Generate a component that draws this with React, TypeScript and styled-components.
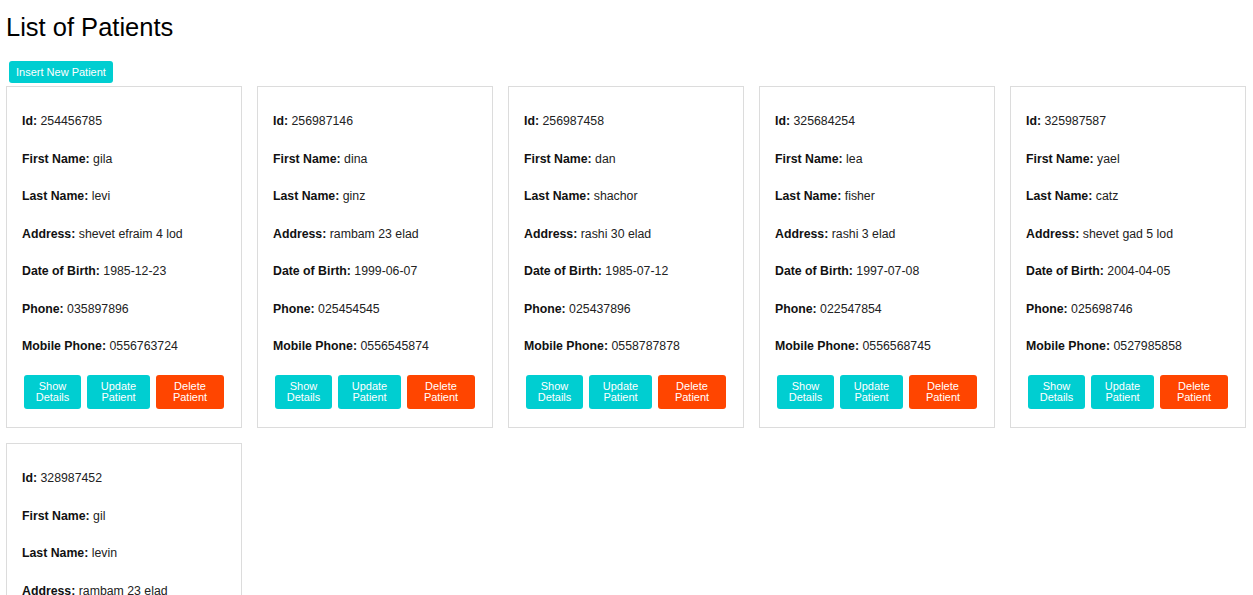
import React from "react";
import styled, { createGlobalStyle } from "styled-components";

const GlobalStyle = createGlobalStyle`
  html, body { margin: 0; padding: 0; background: #fff; }
  body { font-family: "Liberation Sans", Arial, sans-serif; color: #000; }
`;

const Page = styled.div`
  padding: 0 6px;
`;

const Title = styled.h1`
  margin: 12px 0 0 0;
  font-size: 25.5px;
  line-height: 30px;
  font-weight: normal;
  color: #000;
`;

const InsertButton = styled.button`
  margin: 19px 0 3px 3px;
  height: 22px;
  padding: 0 7px;
  font-family: inherit;
  font-size: 11px;
  color: #fff;
  background: #00ced1;
  border: none;
  border-radius: 3px;
  cursor: pointer;
`;

const Grid = styled.div`
  display: flex;
  flex-wrap: wrap;
  gap: 15px;
`;

const Card = styled.div`
  box-sizing: border-box;
  width: 236px;
  border: 1px solid #dcdcdc;
  padding: 26px 15px 18px 15px;
  display: flex;
  flex-direction: column;
`;

const Field = styled.p`
  margin: 0 0 21.5px 0;
  font-size: 12.3px;
  line-height: 16px;
  color: #222;
  white-space: nowrap;
`;

const Label = styled.span`
  font-weight: bold;
  color: #111;
`;

const Actions = styled.div`
  display: flex;
  gap: 6px;
  margin: -0.5px 0 0 2px;
`;

const ActionButton = styled.button<{ $w: number; $danger?: boolean }>`
  box-sizing: border-box;
  width: ${(p) => p.$w}px;
  height: 34px;
  padding: 0;
  font-family: inherit;
  font-size: 11px;
  line-height: 11.5px;
  color: #fff;
  background: ${(p) => (p.$danger ? "#ff4500" : "#00ced1")};
  border: none;
  border-radius: 3px;
  cursor: pointer;
`;

type Patient = {
  id: string;
  first: string;
  last: string;
  address: string;
  dob: string;
  phone: string;
  mobile: string;
};

const patients: Patient[] = [
  { id: "254456785", first: "gila", last: "levi", address: "shevet efraim 4 lod", dob: "1985-12-23", phone: "035897896", mobile: "0556763724" },
  { id: "256987146", first: "dina", last: "ginz", address: "rambam 23 elad", dob: "1999-06-07", phone: "025454545", mobile: "0556545874" },
  { id: "256987458", first: "dan", last: "shachor", address: "rashi 30 elad", dob: "1985-07-12", phone: "025437896", mobile: "0558787878" },
  { id: "325684254", first: "lea", last: "fisher", address: "rashi 3 elad", dob: "1997-07-08", phone: "022547854", mobile: "0556568745" },
  { id: "325987587", first: "yael", last: "catz", address: "shevet gad 5 lod", dob: "2004-04-05", phone: "025698746", mobile: "0527985858" },
  { id: "328987452", first: "gil", last: "levin", address: "rambam 23 elad", dob: "1990-03-14", phone: "039876543", mobile: "0541234567" },
];

function PatientCard({ p }: { p: Patient }) {
  const rows: [string, string][] = [
    ["Id", p.id],
    ["First Name", p.first],
    ["Last Name", p.last],
    ["Address", p.address],
    ["Date of Birth", p.dob],
    ["Phone", p.phone],
    ["Mobile Phone", p.mobile],
  ];
  return (
    <Card>
      {rows.map(([k, v]) => (
        <Field key={k}>
          <Label>{k}:</Label> {v}
        </Field>
      ))}
      <Actions>
        <ActionButton $w={57}>
          Show
          <br />
          Details
        </ActionButton>
        <ActionButton $w={63}>
          Update
          <br />
          Patient
        </ActionButton>
        <ActionButton $w={68} $danger>
          Delete
          <br />
          Patient
        </ActionButton>
      </Actions>
    </Card>
  );
}

export default function App() {
  return (
    <Page>
      <GlobalStyle />
      <Title>List of Patients</Title>
      <InsertButton>Insert New Patient</InsertButton>
      <Grid>
        {patients.map((p) => (
          <PatientCard key={p.id} p={p} />
        ))}
      </Grid>
    </Page>
  );
}
